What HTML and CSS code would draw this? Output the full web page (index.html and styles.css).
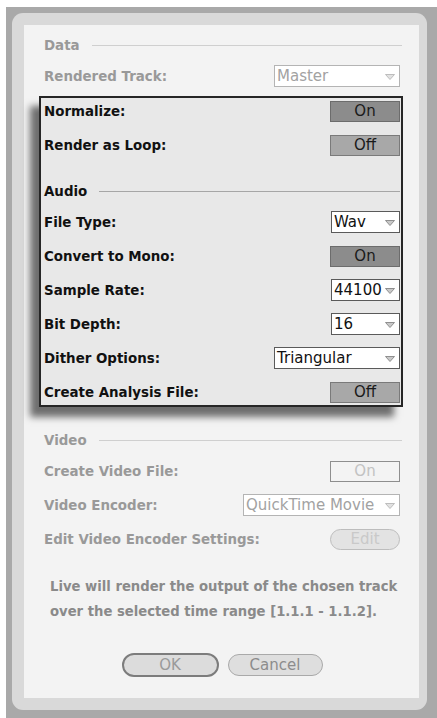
FILE: index.html
```html
<!DOCTYPE html>
<html>
<head>
<meta charset="utf-8">
<link rel="stylesheet" href="styles.css">
</head>
<body>
<div class="frame">
  <div class="bezel">
    <div class="panel">
      <div class="heading dim"><span>Data</span><i class="rule"></i></div>
      <div class="row dim"><span class="label">Rendered Track:</span><div class="select disabled w-md">Master<svg class="arrow" viewBox="0 0 10 6"><polygon points="0.5,0.5 9.5,0.5 5,5.5"/></svg></div></div>

      <div class="focus">
        <div class="row"><span class="label">Normalize:</span><div class="toggle on">On</div></div>
        <div class="row gap"><span class="label">Render as Loop:</span><div class="toggle off">Off</div></div>
        <div class="heading audio"><span>Audio</span><i class="rule"></i></div>
        <div class="row first"><span class="label">File Type:</span><div class="select w-sm">Wav<svg class="arrow" viewBox="0 0 10 6"><polygon points="0.5,0.5 9.5,0.5 5,5.5"/></svg></div></div>
        <div class="row gap"><span class="label">Convert to Mono:</span><div class="toggle on">On</div></div>
        <div class="row gap"><span class="label">Sample Rate:</span><div class="select w-sm">44100<svg class="arrow" viewBox="0 0 10 6"><polygon points="0.5,0.5 9.5,0.5 5,5.5"/></svg></div></div>
        <div class="row gap"><span class="label">Bit Depth:</span><div class="select w-sm">16<svg class="arrow" viewBox="0 0 10 6"><polygon points="0.5,0.5 9.5,0.5 5,5.5"/></svg></div></div>
        <div class="row gap"><span class="label">Dither Options:</span><div class="select w-md">Triangular<svg class="arrow" viewBox="0 0 10 6"><polygon points="0.5,0.5 9.5,0.5 5,5.5"/></svg></div></div>
        <div class="row gap"><span class="label">Create Analysis File:</span><div class="toggle off">Off</div></div>
      </div>

      <div class="heading dim video"><span>Video</span><i class="rule"></i></div>
      <div class="row dim first"><span class="label">Create Video File:</span><div class="toggle ghost">On</div></div>
      <div class="row dim gap"><span class="label">Video Encoder:</span><div class="select disabled w-lg">QuickTime Movie<svg class="arrow" viewBox="0 0 10 6"><polygon points="0.5,0.5 9.5,0.5 5,5.5"/></svg></div></div>
      <div class="row dim gap"><span class="label">Edit Video Encoder Settings:</span><div class="pill edit">Edit</div></div>

      <p class="info">Live will render the output of the chosen track<br>over the selected time range [1.1.1 - 1.1.2].</p>

      <div class="actions">
        <div class="pill ok">OK</div>
        <div class="pill cancel">Cancel</div>
      </div>
    </div>
  </div>
</div>
</body>
</html>
```
FILE: styles.css
```css
html, body {
  margin: 0;
  padding: 0;
  background: #ffffff;
}

body {
  font-family: "DejaVu Sans", "Liberation Sans", sans-serif;
}

.frame {
  margin: 7px 0 0 6px;
  width: 431px;
  height: 711px;
  box-sizing: border-box;
  padding: 6px 10px 8px 6px;
  background: #a9a9a9;
}

.bezel {
  height: 100%;
  box-sizing: border-box;
  padding: 12px 8px 12px 12px;
  background: #d9d9d9;
  border-radius: 11px;
}

.panel {
  height: 100%;
  box-sizing: border-box;
  padding: 7px 19px 0 20px;
  background: #f3f3f3;
}

.heading {
  display: flex;
  align-items: center;
  height: 26px;
  font-size: 13.4px;
  font-weight: bold;
  color: #111;
}

.heading .rule {
  flex: 1;
  height: 1px;
  margin-left: 12px;
  margin-right: -2px;
  background: #cfcfcf;
}

.heading.dim {
  color: #999999;
  margin-bottom: 5px;
}

.heading.audio {
  margin-top: 20px;
}

.heading.audio .rule {
  background: #a6a6a6;
  margin-right: 0;
}

.heading.video {
  margin-top: 20px;
  margin-bottom: 0;
}

.row {
  display: flex;
  align-items: center;
  justify-content: space-between;
  height: 26px;
}

.row.gap {
  margin-top: 8px;
}

.row.first {
  margin-top: 5px;
}

.label {
  font-size: 13.4px;
  font-weight: bold;
  color: #111;
}

.dim .label {
  color: #999999;
}

.focus {
  margin: 7px -3px 0 -5px;
  padding: 0 1px 0 3px;
  border: 2px solid #262626;
  background: #e8e8e8;
  box-shadow: -9px 10px 7px rgba(0, 0, 0, 0.55);
}

.select {
  position: relative;
  box-sizing: border-box;
  height: 22px;
  padding-left: 2px;
  line-height: 20px;
  font-size: 15px;
  color: #111;
  background: #ffffff;
  border: 1px solid #5a5a5a;
  white-space: nowrap;
}

.select.disabled {
  color: #a2a2a2;
  border-color: #b4b4b4;
}

.w-sm { width: 69px; }
.w-md { width: 126px; }
.w-lg { width: 157px; }

.arrow {
  position: absolute;
  right: 4px;
  top: 8px;
  width: 10px;
  height: 6px;
}

.arrow polygon {
  fill: #c9c9c9;
  stroke: #8f8f8f;
  stroke-width: 1;
}

.disabled .arrow polygon {
  fill: #e2e2e2;
  stroke: #bdbdbd;
}

.toggle {
  box-sizing: border-box;
  width: 70px;
  height: 21px;
  line-height: 19px;
  text-align: center;
  font-size: 15px;
  color: #1a1a1a;
  border: 1px solid #6c6c6c;
}

.toggle.on {
  background: #8c8c8c;
}

.toggle.off {
  background: #a8a8a8;
  border-color: #7a7a7a;
}

.toggle.ghost {
  background: transparent;
  border-color: #8e8e8e;
  color: #c2c2c2;
}

.pill {
  box-sizing: border-box;
  text-align: center;
  font-size: 15px;
  border-radius: 12px;
}

.pill.edit {
  width: 70px;
  height: 21px;
  line-height: 19px;
  background: #e3e3e3;
  border: 1px solid #bdbdbd;
  color: #c9c9c9;
}

.info {
  margin: 22px 0 0 6px;
  font-size: 13.2px;
  font-weight: bold;
  line-height: 25px;
  color: #8a8a8a;
}

.actions {
  display: flex;
  justify-content: center;
  gap: 9px;
  margin-top: 29px;
}

.pill.ok {
  width: 97px;
  height: 24px;
  line-height: 20px;
  background: #dcdcdc;
  border: 2px solid #7c7c7c;
  color: #9a9a9a;
}

.pill.cancel {
  width: 95px;
  height: 22px;
  margin-top: 1px;
  line-height: 20px;
  background: #dedede;
  border: 1px solid #a9a9a9;
  color: #8c8c8c;
}
```
